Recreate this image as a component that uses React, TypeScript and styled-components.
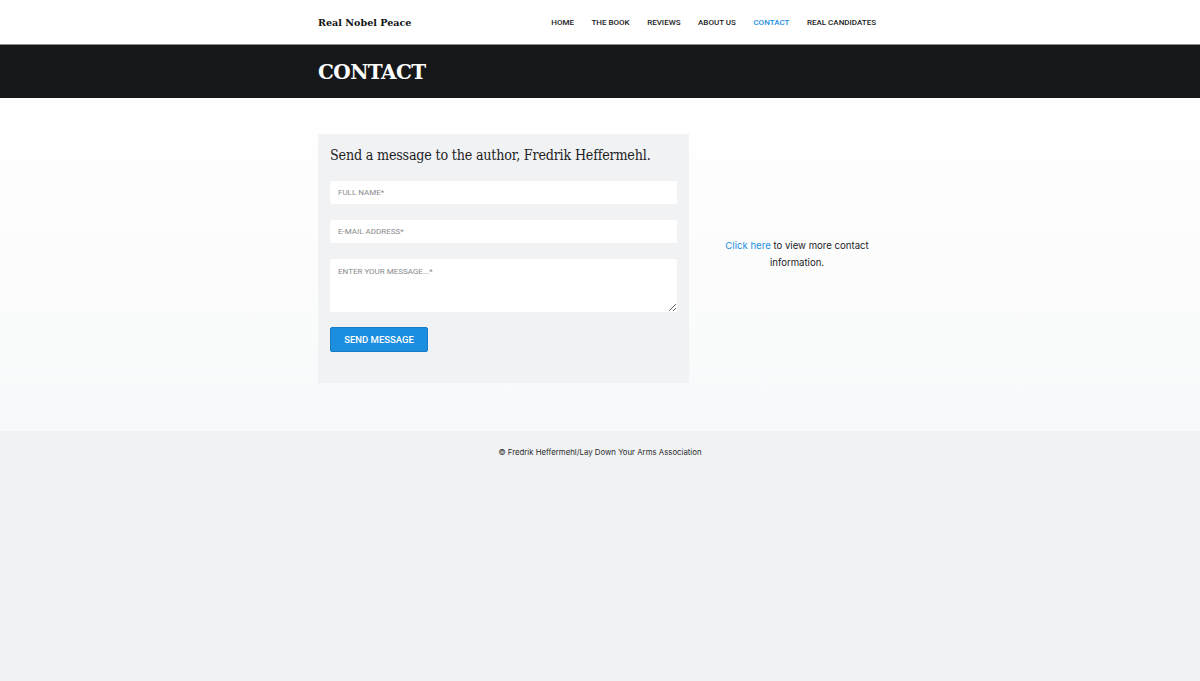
import * as React from "react";
import styled, { createGlobalStyle } from "styled-components";

const GlobalStyle = createGlobalStyle`
  html, body {
    margin: 0;
    padding: 0;
    background: #f1f2f4;
    font-family: Inter, "Liberation Sans", sans-serif;
    color: #1d1d1f;
  }
  * {
    box-sizing: border-box;
  }
`;

const Page = styled.div`
  min-height: 681px;
  display: flex;
  flex-direction: column;
`;

const Container = styled.div`
  width: 558px;
  margin-left: calc(50% - 282px);
`;

const Header = styled.header`
  height: 45px;
  background: #fff;
  border-bottom: 1px solid #8a8b8d;
`;

const HeaderInner = styled(Container)`
  height: 100%;
  display: flex;
  align-items: center;
  justify-content: space-between;
`;

const Logo = styled.a`
  font-family: "DejaVu Serif", "Liberation Serif", serif;
  font-weight: bold;
  font-size: 9.6px;
  color: #111;
  text-decoration: none;
`;

const Nav = styled.nav`
  display: flex;
  gap: 17.5px;
`;

const NavLink = styled.a<{ $active?: boolean }>`
  font-family: Roboto, "Liberation Sans", sans-serif;
  font-weight: 500;
  font-size: 8px;
  text-transform: uppercase;
  color: ${(p) => (p.$active ? "#1b8ee0" : "#1b1c1e")};
  text-decoration: none;
`;

const Band = styled.div`
  height: 53px;
  background: #161719;
  display: flex;
  align-items: center;
`;

const PageTitle = styled.h1`
  margin: 0;
  font-family: "DejaVu Serif", "Liberation Serif", serif;
  font-weight: bold;
  font-size: 20px;
  color: #fff;
  letter-spacing: -0.6px;
`;

const Main = styled.main`
  background: linear-gradient(#ffffff, #f8f9fa);
  padding: 36px 0 48px;
`;

const MainInner = styled(Container)`
  display: flex;
  align-items: center;
`;

const FormCard = styled.form`
  width: 371px;
  height: 249px;
  background: #f1f2f4;
  padding: 11px 12px 0;
  display: flex;
  flex-direction: column;
  align-items: flex-start;
`;

const FormTitle = styled.h2`
  margin: 0 0 16px;
  font-family: "DejaVu Serif", "Liberation Serif", serif;
  font-stretch: condensed;
  font-weight: 300;
  font-size: 14.2px;
  line-height: 20px;
  color: #1d1d1f;
  letter-spacing: -0.2px;
  white-space: nowrap;
`;

const fieldBase = `
  width: 347px;
  border: none;
  border-radius: 2px;
  background: #fff;
  padding: 0 8px;
  font-family: Roboto, "Liberation Sans", sans-serif;
  font-size: 8px;
  color: #333;
  outline: none;
  &::placeholder {
    color: #8a8b8d;
    text-transform: uppercase;
  }
`;

const Input = styled.input`
  ${fieldBase}
  height: 23px;
  margin-bottom: 16px;
`;

const TextArea = styled.textarea`
  ${fieldBase}
  height: 53px;
  padding-top: 8px;
  margin-bottom: 15px;
  resize: vertical;
  display: block;
`;

const SendButton = styled.button`
  width: 98px;
  height: 25px;
  background: #1b8ee0;
  border: 1px solid #167cc6;
  border-radius: 2px;
  color: #fff;
  font-family: Roboto, "Liberation Sans", sans-serif;
  font-weight: 500;
  font-size: 9.5px;
  text-transform: uppercase;
  cursor: pointer;
  padding: 0;
`;

const Aside = styled.div`
  flex: 1;
  display: flex;
  justify-content: center;
  padding-left: 28px;
  padding-right: 10px;
  padding-bottom: 8px;
`;

const AsideText = styled.p`
  margin: 0;
  width: 160px;
  text-align: center;
  font-size: 9.6px;
  line-height: 16.5px;
  color: #1d1d1f;
`;

const TextLink = styled.a`
  color: #1b8ee0;
  text-decoration: none;
`;

const Footer = styled.footer`
  flex: 1;
  background: #f1f2f4;
  padding-top: 16px;
  text-align: center;
  font-size: 7.8px;
  color: #2a2b2d;
`;

export default function App() {
  return (
    <Page>
      <GlobalStyle />
      <Header>
        <HeaderInner>
          <Logo href="#">Real Nobel Peace</Logo>
          <Nav>
            <NavLink href="#">Home</NavLink>
            <NavLink href="#">The Book</NavLink>
            <NavLink href="#">Reviews</NavLink>
            <NavLink href="#">About Us</NavLink>
            <NavLink href="#" $active>
              Contact
            </NavLink>
            <NavLink href="#">Real Candidates</NavLink>
          </Nav>
        </HeaderInner>
      </Header>
      <Band>
        <Container>
          <PageTitle>CONTACT</PageTitle>
        </Container>
      </Band>
      <Main>
        <MainInner>
          <FormCard onSubmit={(e) => e.preventDefault()}>
            <FormTitle>Send a message to the author, Fredrik Heffermehl.</FormTitle>
            <Input placeholder="Full Name*" />
            <Input placeholder="E-mail Address*" />
            <TextArea placeholder="Enter your message...*" />
            <SendButton type="submit">Send Message</SendButton>
          </FormCard>
          <Aside>
            <AsideText>
              <TextLink href="#">Click here</TextLink> to view more contact
              information.
            </AsideText>
          </Aside>
        </MainInner>
      </Main>
      <Footer>© Fredrik Heffermehl/Lay Down Your Arms Association</Footer>
    </Page>
  );
}
